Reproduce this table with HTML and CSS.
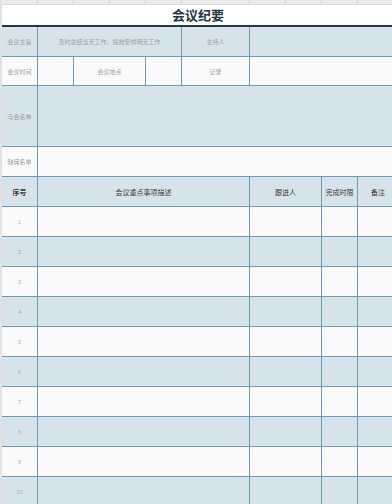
FILE: index.html
```html
<!DOCTYPE html>
<html>

<head>
    <meta charset="UTF-8" />
    <title>会议纪要</title>
    <link rel="stylesheet" href="styles.css">
</head>

<body>
    <div class="sheet">
        <div class="colbar">
            <span class="w35"></span>
            <span class="w35"></span>
            <span class="w35"></span>
            <span class="w35"></span>
            <span class="w35"></span>
            <span class="w67"></span>
            <span class="w35"></span>
            <span class="w35"></span>
            <span class="w35"></span>
            <span class="w35"></span>
        </div>
        <div class="title">会议纪要</div>
        <div class="grid">
            <!-- 基本信息 -->
            <div class="cell blue">会议主旨</div>
            <div class="cell blue span3">及时总结当天工作，提前安排明天工作</div>
            <div class="cell blue">主持人</div>
            <div class="cell blue span3"></div>

            <div class="cell white">会议时间</div>
            <div class="cell white"></div>
            <div class="cell white">会议地点</div>
            <div class="cell white"></div>
            <div class="cell white">记录</div>
            <div class="cell white span3"></div>

            <div class="cell blue">与会名单</div>
            <div class="cell blue span7"></div>

            <div class="cell white">缺席名单</div>
            <div class="cell white span7"></div>

            <!-- 表头 -->
            <div class="cell blue head strong">序号</div>
            <div class="cell blue head span4">会议重点事项描述</div>
            <div class="cell blue head">跟进人</div>
            <div class="cell blue head">完成时限</div>
            <div class="cell blue head">备注</div>

            <!-- 事项 -->
            <div class="cell white num">1</div>
            <div class="cell white span4"></div>
            <div class="cell white"></div>
            <div class="cell white"></div>
            <div class="cell white"></div>

            <div class="cell blue num">2</div>
            <div class="cell blue span4"></div>
            <div class="cell blue"></div>
            <div class="cell blue"></div>
            <div class="cell blue"></div>

            <div class="cell white num">3</div>
            <div class="cell white span4"></div>
            <div class="cell white"></div>
            <div class="cell white"></div>
            <div class="cell white"></div>

            <div class="cell blue num">4</div>
            <div class="cell blue span4"></div>
            <div class="cell blue"></div>
            <div class="cell blue"></div>
            <div class="cell blue"></div>

            <div class="cell white num">5</div>
            <div class="cell white span4"></div>
            <div class="cell white"></div>
            <div class="cell white"></div>
            <div class="cell white"></div>

            <div class="cell blue num">6</div>
            <div class="cell blue span4"></div>
            <div class="cell blue"></div>
            <div class="cell blue"></div>
            <div class="cell blue"></div>

            <div class="cell white num">7</div>
            <div class="cell white span4"></div>
            <div class="cell white"></div>
            <div class="cell white"></div>
            <div class="cell white"></div>

            <div class="cell blue num">8</div>
            <div class="cell blue span4"></div>
            <div class="cell blue"></div>
            <div class="cell blue"></div>
            <div class="cell blue"></div>

            <div class="cell white num">9</div>
            <div class="cell white span4"></div>
            <div class="cell white"></div>
            <div class="cell white"></div>
            <div class="cell white"></div>

            <div class="cell blue num">10</div>
            <div class="cell blue span4"></div>
            <div class="cell blue"></div>
            <div class="cell blue"></div>
            <div class="cell blue"></div>
        </div>
    </div>
</body>

</html>
```

FILE: styles.css
```css
* {
    margin: 0;
    padding: 0;
    box-sizing: border-box;
}

body {
    width: 392px;
    height: 504px;
    overflow: hidden;
    background: #fff;
    font-family: "Noto Sans CJK SC", sans-serif;
}

.sheet {
    width: 400px;
    border-left: 2px solid #e2e2e2;
}

/* 表格顶部的列线 */
.colbar {
    display: flex;
    height: 5px;
    background: #ececec;
    border-bottom: 1px solid #d6d6d6;
}

.colbar span {
    flex: none;
    border-right: 1px solid #d6d6d6;
}

.colbar .w35 {
    width: 36px;
}

.colbar .w67 {
    width: 68px;
}

.title {
    height: 22px;
    line-height: 20px;
    text-align: center;
    font-size: 13px;
    font-weight: bold;
    color: #253540;
    background: #fff;
    border-bottom: 2px solid #243642;
    padding-right: 6px;
}

.grid {
    display: grid;
    grid-template-columns: 35px 35px 71px 35px 67px 71px 35px 40px;
    grid-template-rows: 29px 28px 60px 29px 29px repeat(10, 29px);
    gap: 1px;
    background: #6b9cb2;
}

.cell {
    display: flex;
    align-items: center;
    justify-content: center;
    font-size: 6px;
    color: #9e9e9e;
    white-space: nowrap;
    overflow: hidden;
}

.blue {
    background: #d6e3ea;
}

.white {
    background: #fafafa;
}

.span3 {
    grid-column: span 3;
}

.span4 {
    grid-column: span 4;
}

.span7 {
    grid-column: span 7;
}

.head {
    font-size: 7px;
    color: #3a3a3a;
}

.strong {
    font-weight: bold;
}

.num {
    font-size: 5.5px;
    color: #aaa;
}
```
